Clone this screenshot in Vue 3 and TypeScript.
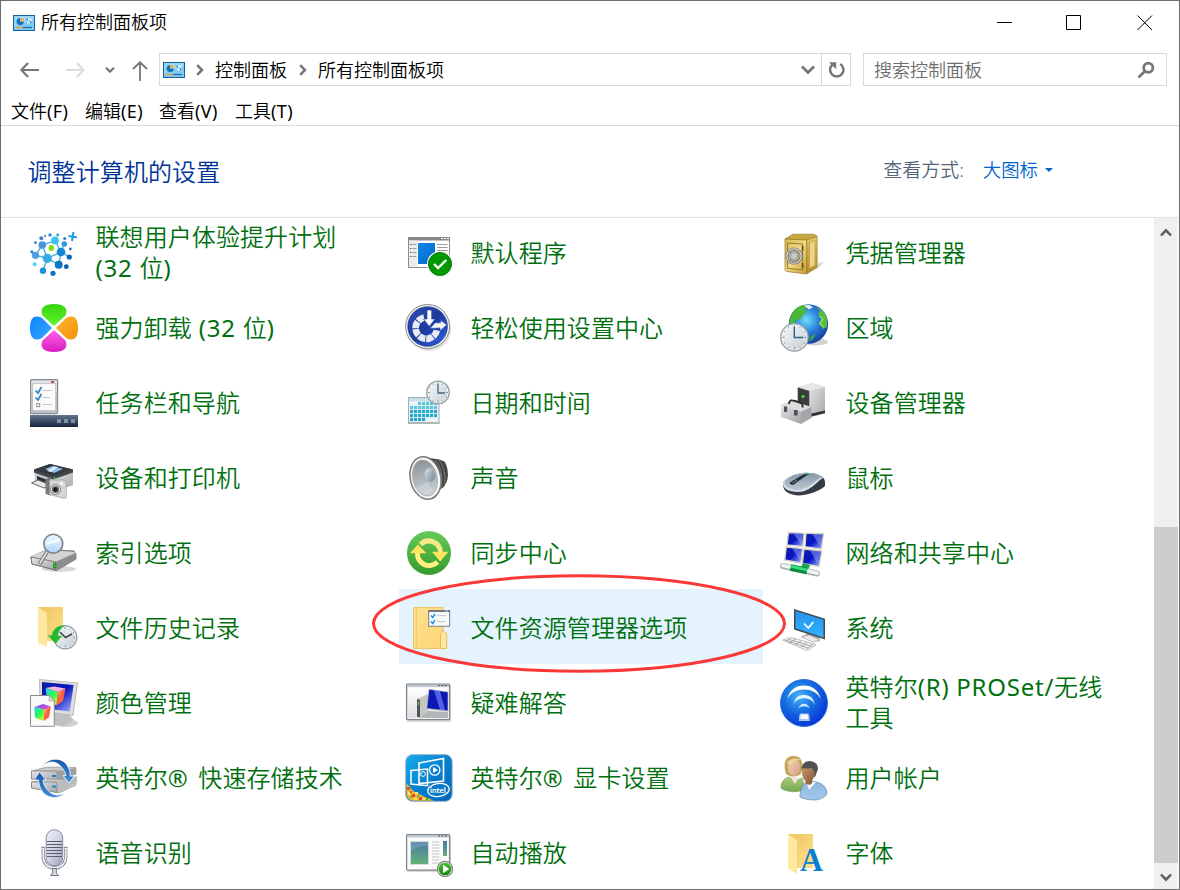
<script setup lang="ts">
interface PanelItem {
  label: string
  icon: string
  active?: boolean
}

interface Run {
  text: string
  kind: 'han' | 'latin' | 'mark'
}

const toRuns = (label: string): Run[] =>
  label
    .split(/(® ?|[\x20-\x7e]+)/)
    .filter((text) => text.length > 0)
    .map((text) => ({
      text,
      kind: text.startsWith('®') ? 'mark' : /^[\x20-\x7e]/.test(text) ? 'latin' : 'han',
    }))

const clockFace = (cx: number, cy: number, r: number): string => {
  let ticks = ''
  for (let i = 0; i < 12; i++) {
    const a = (i * Math.PI) / 6
    const k = i % 3 === 0 ? 0.68 : 0.75
    ticks += `<path d="M${cx + Math.sin(a) * r * k} ${cy - Math.cos(a) * r * k}L${cx + Math.sin(a) * r * 0.83} ${cy - Math.cos(a) * r * 0.83}" stroke="#7d8d99" stroke-width="1"/>`
  }
  return `<circle cx="${cx}" cy="${cy}" r="${r - 0.8}" fill="url(#g-clock)" stroke="#9aa5ab" stroke-width="1.5"/><circle cx="${cx}" cy="${cy}" r="${r - 2}" fill="none" stroke="#f4f7f9" stroke-width="1"/>${ticks}`
}

const calendarCells = (): string => {
  let out = ''
  for (let r = 0; r < 5; r++) {
    for (let c = 0; c < 7; c++) {
      if ((r === 0 && c < 2) || (r === 4 && c > 3)) continue
      out += `<rect x="${5 + c * 4}" y="${23 + r * 4}" width="3.1" height="3.1" fill="${r < 2 ? '#5cc6dc' : '#22a9cf'}"/>`
    }
  }
  return out
}

const sheetLines = (x: number, y: number, w: number, n: number, step: number, color: string): string =>
  Array.from({ length: n }, (_, i) => `<rect x="${x}" y="${y + i * step}" width="${w}" height="1" fill="${color}"/>`).join('')

const experience = (): string => {
  const dots: [number, number, number, string][] = [
    [17.3, 29.3, 4.6, '#35a9e2'], [25, 11.5, 3.9, '#3fc4ee'], [31, 23, 4.3, '#0f86cf'], [28.7, 35.7, 4, '#0b74c4'],
    [13, 41.7, 3.2, '#1f93d8'], [5.5, 26.3, 3.6, '#4f9fe0'], [12.3, 16, 3.8, '#4a93d6'], [34.3, 15, 2.8, '#2c9ce0'],
    [23, 44.3, 2.6, '#1272c0'], [36.3, 37.7, 2.4, '#0e5fae'], [39.3, 28, 2.6, '#0b63b4'], [4.7, 35.3, 2.1, '#5fd4f5'],
    [1.8, 22.7, 1.5, '#2f7ecb'], [5.5, 13.7, 1.4, '#2f7ecb'], [20, 6, 1.7, '#2b86cf'], [11.3, 9.3, 2, '#3b7fc8'],
    [27.7, 6, 1.4, '#2b9ade'], [34.7, 9.5, 1.6, '#2b86cf'], [40.3, 20, 1.4, '#2471bf'], [15, 7, 1, '#2471bf'],
  ]
  return `<path d="M17.3 29.3L31 23M17.3 29.3L28.7 35.7M17.3 29.3L5.5 26.3L12.3 16L25 11.5L31 23L28.7 35.7M31 23L34.3 15M31 23L39.3 28M17.3 29.3L13 41.7M12.3 16L17.3 29.3" stroke="#4bb0e4" stroke-width="1.4" fill="none"/>` +
    dots.map(([x, y, r, c]) => `<ellipse cx="${x}" cy="${y}" rx="${r}" ry="${r}" fill="${c}"/>`).join('') +
    `<circle cx="21.3" cy="19" r="4.2" fill="#fff"/><ellipse cx="21.3" cy="19" rx="2.7" ry="3" fill="#7fe000"/><path d="M43.5 3L42 12M38.5 7L47 8.3" stroke="#1e9fdc" stroke-width="2.1"/>`
}

const netScreen = (p: string, s: string): string =>
  `<path d="${p}" fill="url(#g-screen)" stroke="#d6d2c6" stroke-width="1.3"/><path d="${s}" fill="#8f9cf0" opacity=".55"/>`

const icons = {
  experience: experience(),
  clover: `<path d="M24 22L12.5 11.5C9.5 4 14 0 24 0S38.5 4 35.5 11.5Z" fill="url(#g-lime)"/><path d="M24 26L12.5 36.5C9.5 44 14 48 24 48S38.5 44 35.5 36.5Z" fill="url(#g-pink)"/><path d="M22 24L12 14C4 10 0 14 0 24S4 38 12 34Z" fill="url(#g-azure)"/><path d="M26 24L36 14C44 10 48 14 48 24S44 38 36 34Z" fill="url(#g-orange)"/>`,
  taskbar: `<rect x=".6" y=".6" width="27" height="34" rx=".8" fill="#dfe2e4" stroke="#868b90" stroke-width="1.2"/><rect x="1.2" y="13" width="26" height="21" fill="#b9c1c9"/><rect x="21" y="2" width="3" height="2" fill="#c0504d"/><rect x="2.7" y="4.7" width="23" height="27" fill="#fbfbfb" stroke="#b8bcc0" stroke-width=".8"/><path d="M5.5 11.5L8 14L11.5 8M5.5 18.5L8 21L11.5 15" fill="none" stroke="#2b84c4" stroke-width="1.7"/><rect x="6.7" y="24.7" width="3" height="3" fill="#fff" stroke="#8a8a8a"/><path d="M12.5 11.5H22M12.5 18.5H20M12.5 25.5H22" stroke="#c4c6c8"/><rect y="36" width="48" height="12" fill="url(#g-bar)"/><path d="M27 40h4v4h-4zM34 40h4v4h-4zM41 40h4v4h-4z" fill="#7f8fa8"/>`,
  defaults: `<rect x="3.5" y="8.5" width="41" height="30" fill="#fff" stroke="#8c8c8c"/><rect x="3" y="8" width="42" height="3.5" fill="#85888b"/><path d="M36 9h2v1h-2zM39 9h2v1h-2zM42 9h2v1h-2z" fill="#fff"/><rect x="4" y="11.5" width="8" height="26.5" fill="#ececec"/><path d="M5 15.5h1.5M5 19.5h1.5M5 23.5h1.5M5 27.5h1.5" stroke="#555"/><path d="M7.5 15.5h4M7.5 19.5h4M7.5 23.5h4M7.5 27.5h4" stroke="#999"/><rect x="13" y="14" width="17" height="21" fill="url(#g-win)"/>${sheetLines(32, 15, 10.5, 4, 3, '#9b9b9b')}<circle cx="35" cy="35" r="13" fill="#fff"/><circle cx="35" cy="35" r="11.6" fill="#009a00" stroke="#0b7a0b" stroke-width=".9"/><path d="M29 35L33 39L41.3 31" fill="none" stroke="#fff" stroke-width="2.4"/>`,
  ease: `<ellipse cx="24" cy="25.5" rx="22" ry="21.5" fill="#c9c9c9" opacity=".6"/><circle cx="22.6" cy="22.5" r="22" fill="#f2f2f2" stroke="#8a8a8a" stroke-width="1"/><circle cx="22.6" cy="22.5" r="19.8" fill="url(#g-ease)" stroke="#1b3480" stroke-width=".7"/><path d="M19 13.5A10.8 10.8 0 1 0 32 26" fill="none" stroke="#e9ecf2" stroke-width="6.6" stroke-dasharray="6.9 .9"/><path d="M22 6h4.7V15H30L24.3 22.5L18.5 15H22Z" fill="#fff" stroke="#2747a5" stroke-width=".7"/><path d="M25 24.5L30 18.8H35.5V16L41.8 20.8L35 27V24Z" fill="#f4f5f8" stroke="#2747a5" stroke-width=".7"/>`,
  date: `<rect x="3.5" y="18.5" width="30.5" height="25.5" fill="#eef4f7" stroke="#a3adb2"/><rect x="4" y="19" width="29.5" height="3.5" fill="#c9dfe9"/>${calendarCells()}<rect x="3" y="43.4" width="31.5" height="1.3" fill="#a3a7a9"/>${clockFace(33, 13.5, 12)}<path d="M33 5V14H40" fill="none" stroke="#47657b" stroke-width="1.3"/>`,
  safe: `<path d="M37 40L44 33L38 34Z" fill="#d8d8d8"/><path d="M5 10L13 5.2H34L37.3 7.5L27 11.5Z" fill="#c9a93f" stroke="#8f7420" stroke-width=".6"/><path d="M26.5 11L37.2 7.3V38.5L26.5 45Z" fill="url(#g-gold2)" stroke="#967a25" stroke-width=".6"/><path d="M29.5 13.5L35 11.3V36L29.5 39.5Z" fill="#edd48a" stroke="#c29b35" stroke-width=".7"/><path d="M5 10L26.7 11V45L7 42.5Q5 42 5 40Z" fill="url(#g-gold)" stroke="#8f7420" stroke-width=".7"/><path d="M7.5 14L22.5 15V41L7.5 39.2Z" fill="none" stroke="#9c7d27" stroke-width="1.1"/><path d="M22.6 17v5M22.6 34v5" stroke="#5e4a12" stroke-width="1.6"/><circle cx="14" cy="27" r="7.2" fill="#c3b378" stroke="#6e6f70" stroke-width="2.8"/><circle cx="14" cy="27" r="7.2" fill="none" stroke="#dadcdf" stroke-width="1.3"/><path d="M14 20V34M7 27H21M9 22L19 32M19 22L9 32" stroke="#8b8d8f" stroke-width="1.2"/><circle cx="14" cy="27" r="3.6" fill="#c6c9cd" stroke="#909294" stroke-width=".6"/>`,
  region: `<ellipse cx="35" cy="38" rx="13" ry="3.5" fill="#d3d3d3"/><circle cx="28.4" cy="20" r="19.7" fill="url(#g-globe)"/><path d="M11 12C13 5 20 1 25 1L28 3L24 5L27 8L23 11L20 16L16 15L15 20L11 21L9 18Z" fill="#4ab836"/><path d="M24 1.5L29 1L33 3L29 5.5Z" fill="#e9f3ec"/><path d="M36 3C41 5 45 8 47 14L47 23L43 25L39 19L42 14L38 10L40 7Z" fill="#57bd3c"/><path d="M31 32L36 30L33 35L29 38Z" fill="#3aa63e"/><path d="M39 12L43 15L40 20L44 23" fill="none" stroke="#92d964" stroke-width="1.5"/>${clockFace(14.4, 33.4, 14.4)}<path d="M14.3 23V33.5H23" fill="none" stroke="#355f7d" stroke-width="1.4"/>`,
  device: `<path d="M32 4L45 8V34.5L31 38L18 33V8Z" fill="#c9cacc"/><path d="M18 8L32 4L45 8L29.5 12Z" fill="#e6e7e8"/><path d="M17.7 8.5L29.5 12V36L17.7 32Z" fill="#3b3c3e"/><path d="M29.5 12L45 8.3V34.5L29.5 38Z" fill="url(#g-metal)"/><path d="M29.5 35L45 31.5V34L29.5 38Z" fill="#333"/><circle cx="23" cy="17.5" r="1.5" fill="#32f12c"/><path d="M31.5 27.5V39L21 45V33Z" fill="#a4a6aa"/><path d="M1 25.5L12 21.5L31.5 28L21 33Z" fill="#dcdddf"/><path d="M1 25.5L21 33V45L1 38Z" fill="url(#g-metal)"/><path d="M9 25C9.5 20.5 12 21 15 22L21 24Q23 25 22.5 28.5" fill="none" stroke="#303030" stroke-width="1.9"/><path d="M4 27.5h3.2v5.5H4zM14 31h3.7v5.5H14z" fill="#515357"/>`,
  printer: `<path d="M4.5 18L22 26L43 17V31L23 38L5 29Z" fill="#c6c7c8"/><path d="M22 25L43 17V31L23 37Z" fill="url(#g-metal)"/><path d="M4 15.5L20 10L43 15.5V18.5L23 25.5L4 18.5Z" fill="#43474b"/><path d="M4 15.5L20 10L43 15.5L23 22Z" fill="#343a40"/><path d="M15 15L23 12L33 15L24 19Z" fill="#8cbde8"/><path d="M17 17L24 12.5L28 13L21 18Z" fill="#deefff"/><path d="M7 22L20 27V30L7 26Z" fill="#2e3032"/><path d="M1.5 29L8 26L20 31L14 34Z" fill="#e8e8e8" stroke="#626467" stroke-width="1"/><path d="M15.5 25L21 23V41.5L15.5 40Z" fill="#777a7c"/><path d="M19.5 26H34L36.3 28V43.5L34 44.5L19.5 40.5Z" fill="#d5d6d6" stroke="#929292" stroke-width=".6"/><circle cx="25.5" cy="35.5" r="5" fill="#efefef" stroke="#777" stroke-width="1"/><circle cx="25.5" cy="35.5" r="3.5" fill="#555a5c"/><circle cx="25.3" cy="35.5" r="1.9" fill="#16191b"/><rect x="30" y="28.5" width="3" height="2" fill="#fff"/><circle cx="24.5" cy="24" r="1.1" fill="#29d337"/>`,
  indexing: `<ellipse cx="29" cy="40" rx="17" ry="3" fill="#d8d8d8"/><path d="M.8 28L17 20.5L44 22L46 25V30L26.5 41.5L2 35Z" fill="#a9aaab" stroke="#656565" stroke-width=".8"/><path d="M.8 27.5L17 20.5L46 23.5L26 32.5Z" fill="#d4d4d4"/><path d="M1 28L26 33V41L2 35Z" fill="url(#g-metal)" stroke="#686868" stroke-width=".7"/><path d="M26 33L46 24V30L26.5 41.3Z" fill="#8b8d8e"/><rect x="23.3" y="34" width="2.6" height="5" fill="#18dc18" stroke="#075a07" stroke-width=".5"/><path d="M17 23L9.5 35" stroke="#666" stroke-width="3.7"/><path d="M17 23L9.7 34.5" stroke="#dfdfdf" stroke-width="2"/><circle cx="23.3" cy="14.7" r="9.5" fill="url(#g-lens)" stroke="#7e8286" stroke-width="1.6"/><path d="M16 15Q21 13 30 11" stroke="#fff" stroke-width="2.5" opacity=".7" fill="none"/>`,
  history: `<path d="M8 3H33V37H17L8 8Z" fill="url(#g-fold)"/><path d="M8 3L17 9V43L8 39Z" fill="#ffe8a0"/>${clockFace(35.2, 33.3, 12.3)}<path d="M30 28L35.5 33.5L42 30" fill="none" stroke="#3b444c" stroke-width="1.5"/><path d="M35 21.5C27 21 22.5 26 22 31.5H18L25.5 39.5L32 32H28C28 28 30 24.5 35 21.5Z" fill="#27b72e" stroke="#5ec95f" stroke-width=".6"/>`,
  sound: `<path d="M24 4Q36 5 40 8Q44 16 42.5 25Q41 31 37.5 34L28 39Z" fill="#454545"/><path d="M30 6Q39 14 36 34M34 6.5Q42 16 39.5 32" stroke="#767676" fill="none" stroke-width="1"/><ellipse cx="20.5" cy="24" rx="15.2" ry="21.5" transform="rotate(-13 20.5 24)" fill="#f5f5f5" stroke="#797979" stroke-width="1.5"/><ellipse cx="20" cy="24" rx="12.2" ry="18.3" transform="rotate(-13 20 24)" fill="url(#g-cone)" stroke="#aaa" stroke-width=".8"/><ellipse cx="25" cy="20.8" rx="5.2" ry="7" transform="rotate(-10 25 21)" fill="url(#g-dome)"/><path d="M10 34Q18 31 22 27L28 36Q24 42 18 40Z" fill="#cdd9df" opacity=".5"/>`,
  sync: `<circle cx="24" cy="24" r="22" fill="url(#g-sync)"/><path d="M15.5 15.5A11.7 11.7 0 0 1 35.5 23.5" fill="none" stroke="#f4ea83" stroke-width="5"/><path d="M27 22.7H43.3L35.2 32.5Z" fill="#ffe45f"/><path d="M32.5 33A11.7 11.7 0 0 1 12.5 23.5" fill="none" stroke="#fff07f" stroke-width="5"/><path d="M5 24.3H21.5L12.8 15.5Z" fill="#ffe45f"/>`,
  options: `<path d="M8.5 3.5H38V29H41.5V44.5H8.5Z" fill="url(#g-folder)" stroke="#eac45a" stroke-width=".9"/><path d="M11.5 4V44" stroke="#edc95e" stroke-width=".7"/><path d="M35.5 44.5V30L38 26.5L41.7 30V44.5Z" fill="#ffe7a1" stroke="#e2b64f" stroke-width=".8"/><rect x="23.6" y="6.6" width="21" height="15.7" fill="#f8fafb" stroke="#8b9197" stroke-width="1.2"/><path d="M23 7h22" stroke="#70777e" stroke-width="2"/><path d="M40 7h1M42 7h1" stroke="#fff"/><path d="M26 11.5L27.7 13.5L30 10M26 17.5L27.7 19.5L30 16" fill="none" stroke="#268bd8" stroke-width="1.4"/><path d="M31.5 11.7H41M31.5 17.7H41" stroke="#bfc3c7"/>`,
  mouse: `<path d="M3 31C2 24 18 18.7 26 18.7C37 18.7 45 22 45 28V32C41 36 29 41.5 18 41.5C8 41 3 36 3 31Z" fill="#343c45"/><path d="M3 30C3 24 18 18.7 26 18.7C33 18.5 42 21 43 24C38 26 31 38 18 38C8 38 3 34 3 30Z" fill="#d8dfe5"/><path d="M4.5 28.5C6 23 19 19.3 26 19.3C33 19 40 21.3 42 23.3C36 25 29 36 17 36C9 35.5 4.5 32 4.5 28.5Z" fill="url(#g-mouse)"/><path d="M9.5 29C14 26 20 22 25 20L28.5 20.5C24 23 19 26.5 14 30.5Q10.5 31.5 9.5 29Z" fill="#222d36"/><path d="M12.5 29L17 26" stroke="#66727d" stroke-width="1.5"/><path d="M26 19.5L30 20.5" stroke="#38ad4a" stroke-width="1.2"/>`,
  network: `${netScreen('M8.5 3.5L24 4.3L22.7 17.5L7 15.8Z', 'M13 4L23 4.4L21.5 16Z')}${netScreen('M26 4.2L43.5 4.8L41.3 20L25 17.7Z', 'M32 4.8L42.8 5.3L41 18.5Z')}${netScreen('M6.3 18L22.4 19.7L20.7 34L4.8 31Z', 'M12 19L21.6 20L20 32Z')}${netScreen('M24 20L41.7 22L39 37.5L22.4 34.5Z', 'M30 21L40.8 22.6L38 36Z')}<path d="M23 34L30 36L28 42L20 40Z" fill="#13a84b"/><path d="M3 37L37 44.5" stroke="#aab3b0" stroke-width="6" stroke-linecap="round"/><path d="M3 36.5L37 44" stroke="#eef5f2" stroke-width="3.8" stroke-linecap="round"/><path d="M10.5 38.5L27 42" stroke="#098c3b" stroke-width="6.7"/><path d="M11 37.3L27 41" stroke="#37e07d" stroke-width="2.8"/>`,
  system: `<path d="M21 33L28 29L39 32L40 37L33 38Z" fill="#a8abae"/><path d="M21 33L29 31L40 36L33 38Z" fill="#ececec" stroke="#999" stroke-width=".5"/><path d="M14 5L45 14.7V35.5L14 25.5Z" fill="#42494e"/><path d="M15.5 7L43.5 15.7V33.4L15.5 24.3Z" fill="url(#g-sys)"/><path d="M24 19.5L28.3 24L33.3 18" fill="none" stroke="#fff" stroke-width="1.7"/><path d="M2.5 36L11 33.4L36 40.5L29 46L26 46.2Z" fill="#f0f0f0" stroke="#9c9c9c" stroke-width=".6"/><path d="M5 36L28 44M8 35L32 42.5M9 39L16 35M15 41L21 37M21 43L27 38.5M27 45L33 40" stroke="#aaa" stroke-width="1"/>`,
  color: `<ellipse cx="36" cy="44" rx="12" ry="4" fill="#d2d2d2"/><path d="M23 34L39 36L44 41Q35 49 24 46Z" fill="#bfc1c3"/><path d="M9.5 .5L47.6 4L43 36.5L10 32Z" fill="#deded8" stroke="#999" stroke-width=".6"/><path d="M12 3L43.6 6L39.8 32.4L12 29Z" fill="url(#g-screen)"/><path d="M15.7 9L28 13L26.5 26.5L17 21Z" fill="url(#g-cubeleft)"/><path d="M28 13L35.5 9.5L33 22L26.5 26.5Z" fill="url(#g-cuberight)"/><path d="M15.7 9L24 7.5L35.5 9.5L28 13Z" fill="#f6b6dc"/><path d="M.5 16.5H19L24.3 21.5V47.3H.5Z" fill="#fafafa" stroke="#8b8b8b"/><path d="M19 16.5V22H24.3Z" fill="#ddd" stroke="#999" stroke-width=".6"/><path d="M4.3 28L14.5 30.5L13.5 42L5 38.5Z" fill="url(#g-cubeleft)"/><path d="M14.5 30.5L20.8 27.5L19 38.5L13.5 42Z" fill="url(#g-cuberight)"/><path d="M4.3 28L13 25L20.8 27.5L14.5 30.5Z" fill="url(#g-top)"/>`,
  storage: `<path d="M1.5 17L17 13L46 13.5V20L28 27.5L1.5 25Z" fill="#c8cacb" stroke="#888" stroke-width=".6"/><path d="M1.5 17H27V27.5L1.5 25Z" fill="url(#g-metal)" stroke="#777" stroke-width=".7"/><path d="M27 17L46 14V20L28 27.5Z" fill="#9b9fa2"/><path d="M1.5 28L17 25L46 25.5V31L29 39L1.5 34Z" fill="#c8cacb" stroke="#888" stroke-width=".6"/><path d="M1.5 28H27V38.5L1.5 34Z" fill="url(#g-metal)" stroke="#777" stroke-width=".7"/><path d="M27 28L47 22V28L29 39Z" fill="#babdbf"/><path d="M22 22h4M22 32.5h4" stroke="#1689cf" stroke-width="2"/><path d="M11.5 13C17 4 31 2 37 11C40 16 40.3 19 40.3 22H44.5L39 29L33 21.5H36C34 14 28 8 22 8C18 8 14 10 11.5 13Z" fill="url(#g-arrow)" stroke="#fff" stroke-width=".8"/><path d="M36 38C29 46 17 45 12 37C9 32 9 30 8.5 26H4L9.5 18L16 26H13C14 35 22 41.5 28 41Q33 40.5 36 38Z" fill="url(#g-arrow)" stroke="#fff" stroke-width=".8"/>`,
  mic: `<rect x="16.2" y=".7" width="16.5" height="36" rx="8.2" fill="url(#g-mic)" stroke="#868aa0" stroke-width="1"/><path d="M17 12.5H32M17 15.5H32M17 18.5H32M17 21.5H32M17 24.5H32M17 27.5H32" stroke="#5a5f70" stroke-width="1.2"/><path d="M13.3 20V29Q14 38 24.5 39Q35 38 35.7 29V20" fill="none" stroke="#7b7e8b" stroke-width="3.3"/><path d="M13.3 20V29Q14 38 24.5 39Q35 38 35.7 29V20" fill="none" stroke="#f2f2f5" stroke-width="1.8"/><path d="M11.3 18.5h4M33.7 18.5h4" stroke="#8a8c99" stroke-width="1.3"/><path d="M22.7 39.5H26.3V44L28.5 46.5H20.5L22.7 44Z" fill="#d9dce5" stroke="#656979" stroke-width=".9"/>`,
  trouble: `<rect x="2" y="7" width="44" height="36" fill="#bbb" opacity=".55"/><rect x="1.6" y="5.1" width="43" height="35.5" rx=".8" fill="#f4f5f6" stroke="#7d858d" stroke-width="1.3"/><rect x="2.3" y="5.7" width="41.7" height="2.2" fill="#bdc5cd"/><path d="M33 6.5h2M36.5 6.5h2M40 6.5h2" stroke="#555" stroke-width="1.2"/><rect x="3" y="9" width="40" height="30" fill="url(#g-paper)"/><path d="M12 20L23 15V35L14 38.5L12 38Z" fill="#c6c6c6"/><path d="M12 20L15 21V38.5L12 37.5Z" fill="#555"/><path d="M13.5 23v3" stroke="#5ce336"/><path d="M23 32L43 33V39H15Z" fill="#b4b6b8"/><path d="M24 10.3L43 13V32L21.8 29.5Z" fill="#0a18b4" stroke="#bbb" stroke-width=".7"/><path d="M29 11L35 12L40 31L35 31Z" fill="#8392ff" opacity=".6"/>`,
  intel: `<rect x=".6" y=".6" width="46.6" height="46.8" rx="7" fill="url(#g-intel)" stroke="#9eb5cc" stroke-width="1"/><path d="M1.5 29L8 37L18 42L29 46.8H8Q1.5 46 1.5 39Z" fill="#f2b82b"/><path d="M2 33h3v3H2zM7 40h3v3H7zM14 43h3v3h-3zM5 37h2v2H5z" fill="#e54a2c"/><path d="M3 38h2v3H3zM10 38h3v2h-3zM17 44h3v2h-3zM9 44h3v2H9z" fill="#ffe26e"/><path d="M5 42h2v2H5zM12 41h2v2h-2zM21 44h2v2h-2z" fill="#54b557"/><path d="M14 9L38.5 4.5V27L14 29.5Z" fill="none" stroke="#fff" stroke-width="1.6"/><path d="M6 16.5L22.5 15V31.7L6 30Z" fill="none" stroke="#fff" stroke-width="1.5"/><circle cx="29.7" cy="16" r="5.2" fill="none" stroke="#fff" stroke-width="1.3"/><path d="M28 13V19L33 16Z" fill="#fff"/><circle cx="18" cy="20" r="2.4" fill="none" stroke="#fff"/><ellipse cx="33.5" cy="36" rx="10.8" ry="6.5" transform="rotate(-8 33.5 36)" fill="#0878c8" stroke="#fff" stroke-width="1.2"/><text x="25" y="38.7" font-family="Lato, sans-serif" font-weight="bold" font-size="8" fill="#fff">intel</text>`,
  autoplay: `<rect x="2" y="7" width="44" height="36" fill="#bbb" opacity=".55"/><rect x="1.6" y="5.6" width="43" height="35.5" rx=".8" fill="#fbfbfb" stroke="#7d858d" stroke-width="1.3"/><rect x="2.3" y="6.2" width="41.7" height="2.2" fill="#bdc5cd"/><path d="M33 7h2M36.5 7h2M40 7h2" stroke="#555" stroke-width="1.2"/><rect x="5" y="12" width="19" height="24" fill="#d6dcde"/><rect x="6" y="13" width="17" height="22" fill="url(#g-play)"/><path d="M6 22Q13 17 23 17V13H6Z" fill="#fff" opacity=".17"/>${sheetLines(27, 12.5, 7.5, 8, 3, '#c4c8cb')}<rect x="38" y="12" width="4" height="15" fill="url(#g-play)"/><circle cx="40" cy="40" r="7.6" fill="#e8e8e8" stroke="#858585" stroke-width="1.2"/><circle cx="40" cy="40" r="6.3" fill="url(#g-green)"/><path d="M38 35.8V44.2L44.2 40Z" fill="#fff"/>`,
  wifi: `<circle cx="24" cy="24" r="23.5" fill="url(#g-wifi)" stroke="#2c6fe0" stroke-width="1"/><path d="M7.3 20Q11 6.5 24 6.5T40.7 20Q36 10.5 24 10.5T7.3 20Z" fill="#fff"/><path d="M13.3 26Q15 15.8 24 15.8T35 26Q32 19.5 24 19.3T13.3 26Z" fill="#e2f5ff"/><path d="M18.5 29.5Q20 24.8 24 24.8T29.7 29.5Q27.5 27.3 24 27.2T18.5 29.5Z" fill="#c9ebff"/><path d="M20 34.5h8.5L29.7 38V42H19V38Z" fill="#a5c4f7"/><path d="M20.5 35.5h7.5V40H20.5Z" fill="#f4faff"/>`,
  users: `<path d="M1 34C1 27 5 24 9 23L15 27L22 24Q24 27 24 36Q12 40 2 35Z" fill="url(#g-greenwear)" stroke="#769552" stroke-width=".6"/><path d="M10 22L15 30L19 23Z" fill="#f3e5dc"/><path d="M6 20C2 7 7 1.5 14 2C22 2 24 9 21 20Q14 25 6 20Z" fill="#c5a45b"/><path d="M9 8Q14 5 19 8Q22 16 17 21Q13 23 9.5 19Q7 14 9 8Z" fill="url(#g-skin)"/><path d="M7 8Q13 2.5 22 6Q15 6 9 11Z" fill="#ead6a0"/><path d="M20 41C21 31 25 28 30 27L36 28Q46 30 47 39Q46 44 36 46Q25 46 20 43Z" fill="url(#g-bluewear)" stroke="#6486aa" stroke-width=".7"/><path d="M26 28L29 36L36 28Z" fill="#f3f5f8"/><path d="M21.5 14Q23 7 30 7Q38 8 38 15L35 23L23 20Z" fill="#505050"/><path d="M22.5 14Q25 15 32 14L35 19Q33 29 28 29Q22 25 22 19Z" fill="url(#g-skin2)"/><path d="M25 26.5Q28 30 32 26V29.5Q29 32 26 29.5Z" fill="#94673d"/>`,
  fonts: `<path d="M8 5H33V39H17L8 10Z" fill="url(#g-fold)"/><path d="M8 5L17 11V45L8 39.5Z" fill="#ffe8a0"/><text x="20" y="42.3" font-family="Liberation Serif, serif" font-weight="bold" font-size="33" textLength="23" lengthAdjust="spacingAndGlyphs" fill="#0a7fd0">A</text>`,
}

const items: PanelItem[] = [
  { label: '联想用户体验提升计划\n(32 位)', icon: icons.experience },
  { label: '默认程序', icon: icons.defaults },
  { label: '凭据管理器', icon: icons.safe },
  { label: '强力卸载 (32 位)', icon: icons.clover },
  { label: '轻松使用设置中心', icon: icons.ease },
  { label: '区域', icon: icons.region },
  { label: '任务栏和导航', icon: icons.taskbar },
  { label: '日期和时间', icon: icons.date },
  { label: '设备管理器', icon: icons.device },
  { label: '设备和打印机', icon: icons.printer },
  { label: '声音', icon: icons.sound },
  { label: '鼠标', icon: icons.mouse },
  { label: '索引选项', icon: icons.indexing },
  { label: '同步中心', icon: icons.sync },
  { label: '网络和共享中心', icon: icons.network },
  { label: '文件历史记录', icon: icons.history },
  { label: '文件资源管理器选项', icon: icons.options, active: true },
  { label: '系统', icon: icons.system },
  { label: '颜色管理', icon: icons.color },
  { label: '疑难解答', icon: icons.trouble },
  { label: '英特尔(R) PROSet/无线\n工具', icon: icons.wifi },
  { label: '英特尔® 快速存储技术', icon: icons.storage },
  { label: '英特尔® 显卡设置', icon: icons.intel },
  { label: '用户帐户', icon: icons.users },
  { label: '语音识别', icon: icons.mic },
  { label: '自动播放', icon: icons.autoplay },
  { label: '字体', icon: icons.fonts },
]

const menus: string[] = ['文件(F)', '编辑(E)', '查看(V)', '工具(T)']

const panelGlyph = `<rect x=".5" y=".5" width="21" height="15" fill="#7dcbf5" stroke="#1c5f96"/><path d="M1 1H21V4L1 12Z" fill="#a6defc" opacity=".6"/><circle cx="7.2" cy="6.5" r="3.6" fill="#1372b8"/><path d="M7.5 6.2V2.2A4 4 0 0 1 11.5 6.2Z" fill="#f4a62a" stroke="#c9ecfd" stroke-width=".6"/><path d="M14 4.5H19M14 7.5H19" stroke="#eef8ff" stroke-width="1.4"/><path d="M13.5 4.5h1.5M17 7.5h1.5" stroke="#1372b8" stroke-width="1.4"/><path d="M3 12.5H10" stroke="#f0a030" stroke-width="1.3"/><path d="M10 12.5H19" stroke="#1d6ea8" stroke-width="1.3"/>`

interface Gradient {
  id: string
  from: string
  to: string
  mid?: string
  diagonal?: boolean
}

const gradients: Gradient[] = [
  { id: 'g-clock', from: '#f7f9fa', to: '#c3cdd4', diagonal: true },
  { id: 'g-lime', from: '#35d30a', to: '#62f533' },
  { id: 'g-pink', from: '#ff62e8', to: '#d91bbd' },
  { id: 'g-azure', from: '#0a86ff', to: '#3ba5ff', diagonal: true },
  { id: 'g-orange', from: '#ffb32d', to: '#f09408', diagonal: true },
  { id: 'g-bar', from: '#66758e', to: '#16243f', mid: '#3c4b66' },
  { id: 'g-win', from: '#1088e8', to: '#0067ca', diagonal: true },
  { id: 'g-ease', from: '#2c50b8', to: '#2f64e8', mid: '#1b3b9c', diagonal: true },
  { id: 'g-gold', from: '#d9ba54', to: '#c39a35', mid: '#f0d888', diagonal: true },
  { id: 'g-gold2', from: '#e4c465', to: '#b08b2c' },
  { id: 'g-metal', from: '#e3e4e5', to: '#a4a6a9', diagonal: true },
  { id: 'g-lens', from: '#eef8ff', to: '#b0d4fb' },
  { id: 'g-fold', from: '#edc55f', to: '#ffe08a', diagonal: true },
  { id: 'g-folder', from: '#fee093', to: '#fbd671', diagonal: true },
  { id: 'g-cone', from: '#8d9296', to: '#ccd4d9' },
  { id: 'g-dome', from: '#d9e7f0', to: '#71818d', diagonal: true },
  { id: 'g-sync', from: '#64cb59', to: '#36992d' },
  { id: 'g-mouse', from: '#8597ab', to: '#bdc8d4' },
  { id: 'g-screen', from: '#1020a0', to: '#aab6ff', mid: '#0714c4', diagonal: true },
  { id: 'g-sys', from: '#2494ee', to: '#35b1ff' },
  { id: 'g-cubeleft', from: '#10d8ff', to: '#f4ff20', mid: '#30f850', diagonal: true },
  { id: 'g-cuberight', from: '#ffc04a', to: '#ff7a30', mid: '#ff5a48', diagonal: true },
  { id: 'g-top', from: '#5364ff', to: '#ff40c7', diagonal: true },
  { id: 'g-arrow', from: '#1557a8', to: '#468fd9' },
  { id: 'g-mic', from: '#f1f2fb', to: '#999db6', mid: '#d1d5e4', diagonal: true },
  { id: 'g-paper', from: '#ffffff', to: '#dddee0' },
  { id: 'g-intel', from: '#16adf0', to: '#0365b7', mid: '#0780cd', diagonal: true },
  { id: 'g-play', from: '#4777a5', to: '#62b278' },
  { id: 'g-green', from: '#49c333', to: '#16820f' },
  { id: 'g-greenwear', from: '#aacd80', to: '#75a74b' },
  { id: 'g-bluewear', from: '#8bb6df', to: '#a4c7eb' },
  { id: 'g-skin', from: '#f4d1b6', to: '#d49f7d', diagonal: true },
  { id: 'g-skin2', from: '#ca986a', to: '#805431', diagonal: true },
]
</script>

<template>
  <div class="window">
    <svg class="defs" width="0" height="0" aria-hidden="true">
      <defs>
        <linearGradient v-for="g in gradients" :id="g.id" :key="g.id" x1="0" y1="0" :x2="g.diagonal ? 1 : 0" y2="1">
          <stop offset="0" :stop-color="g.from" />
          <stop v-if="g.mid" offset=".5" :stop-color="g.mid" />
          <stop offset="1" :stop-color="g.to" />
        </linearGradient>
        <radialGradient id="g-globe" cx=".45" cy=".4" r=".6">
          <stop offset="0" stop-color="#6fe0f8" />
          <stop offset=".5" stop-color="#2a85dd" />
          <stop offset="1" stop-color="#163f9f" />
        </radialGradient>
        <radialGradient id="g-wifi" cx=".4" cy=".35" r=".65">
          <stop offset="0" stop-color="#46b4f5" />
          <stop offset=".5" stop-color="#176fe2" />
          <stop offset="1" stop-color="#0738d4" />
        </radialGradient>
      </defs>
    </svg>

    <header class="titlebar">
      <svg class="app-icon" viewBox="0 0 22 16" v-html="panelGlyph"></svg>
      <span class="title">所有控制面板项</span>
      <div class="controls">
        <svg viewBox="0 0 16 16"><path d="M0 7.5H15" /></svg>
        <svg viewBox="0 0 16 16"><path d="M.5 .5H14.5V14.5H.5Z" /></svg>
        <svg viewBox="0 0 16 16"><path d="M.5 .5L15 15M15 .5L.5 15" /></svg>
      </div>
    </header>

    <nav class="toolbar">
      <div class="history">
        <svg class="back" viewBox="0 0 20 16"><path d="M8 1L1.5 8L8 15M1.5 8H19" /></svg>
        <svg class="forward" viewBox="0 0 20 16"><path d="M12 1L18.5 8L12 15M18.5 8H1" /></svg>
        <svg class="recent" viewBox="0 0 10 6"><path d="M1 .8L5 4.6L9 .8" /></svg>
        <svg class="up" viewBox="0 0 16 20"><path d="M1 8L8 1.3L15 8M8 1.5V20" /></svg>
      </div>
      <div class="address">
        <svg class="app-icon" viewBox="0 0 22 16" v-html="panelGlyph"></svg>
        <svg class="crumb" viewBox="0 0 8 12"><path d="M1.2 1.2L6 6L1.2 10.8" /></svg>
        <span>控制面板</span>
        <svg class="crumb second" viewBox="0 0 8 12"><path d="M1.2 1.2L6 6L1.2 10.8" /></svg>
        <span>所有控制面板项</span>
        <svg class="drop" viewBox="0 0 14 10"><path d="M1 1.5L7 7.5L13 1.5" /></svg>
        <div class="refresh">
          <svg viewBox="0 0 18 18"><path d="M12.2 3A6.7 6.7 0 1 1 5 3.2" /><path class="solid" d="M1 1.2H8.2V8.2L5.9 5.9L3.5 3.8Z" /></svg>
        </div>
      </div>
      <div class="search">
        <span>搜索控制面板</span>
        <svg viewBox="0 0 18 18"><circle cx="11.3" cy="6.7" r="4.6" /><path d="M7.8 10.2L1.5 16.5" /></svg>
      </div>
    </nav>

    <div class="menubar">
      <div v-for="menu in menus" :key="menu" class="menu"><span v-for="(run, i) in toRuns(menu)" :key="i" :class="run.kind">{{ run.text }}</span></div>
    </div>

    <section class="heading">
      <h1>调整计算机的设置</h1>
      <div class="view">
        <span class="view-label">查看方式:</span>
        <span class="view-value">大图标</span>
        <i class="caret"></i>
      </div>
    </section>

    <main class="content">
      <div class="grid">
        <div v-for="item in items" :key="item.label" class="item" :class="{ active: item.active }">
          <svg class="icon" viewBox="0 0 48 48" v-html="item.icon"></svg>
          <div class="label">
            <div v-for="(line, n) in item.label.split('\n')" :key="n" class="line"><span v-for="(run, i) in toRuns(line)" :key="i" :class="run.kind">{{ run.text }}</span></div>
          </div>
        </div>
      </div>
      <div class="scrollbar">
        <svg viewBox="0 0 12 9"><path d="M1 7.5L6 2.3L11 7.5" /></svg>
        <div class="track"><div class="thumb"></div></div>
        <svg viewBox="0 0 12 9"><path d="M1 1.5L6 6.7L11 1.5" /></svg>
      </div>
    </main>

    <svg class="marker" viewBox="0 0 416 100"><ellipse cx="208" cy="50.5" rx="205.5" ry="47.7" /></svg>
  </div>
</template>

<style>
body {
  margin: 0;
  background: #fff;
}
</style>

<style scoped>
.window {
  position: relative;
  box-sizing: border-box;
  width: 1180px;
  height: 890px;
  overflow: hidden;
  display: flex;
  flex-direction: column;
  border: 1px solid #6e6c6e;
  background: #fff;
  color: #000;
  font: 18px/24px "Noto Sans", "Noto Sans CJK SC", sans-serif;
  font-weight: 350;
}

svg {
  display: block;
  flex: none;
  fill: none;
}

.latin,
.mark {
  font-weight: 400;
}

.defs {
  position: absolute;
}

.titlebar {
  display: flex;
  align-items: center;
  height: 43px;
  padding-left: 12px;
}

.app-icon {
  width: 22px;
  height: 16px;
}

.title {
  margin: 0 0 1px 6px;
}

.controls {
  display: flex;
  margin: 0 26px 0 auto;
  gap: 54px;
}

.controls svg {
  width: 16px;
  height: 16px;
  stroke: #000;
  stroke-width: 1;
}

.controls svg:nth-child(2) {
  margin-right: 1px;
  margin-left: -1px;
}

.toolbar {
  display: flex;
  height: 33px;
  margin-top: 9px;
}

.history {
  display: flex;
  align-items: center;
  width: 158px;
  box-sizing: border-box;
  padding-left: 19px;
  stroke: #767676;
  stroke-width: 2.2;
}

.history .back,
.history .forward {
  width: 20px;
  height: 16px;
}

.history .forward {
  margin-left: 25px;
  stroke: #dcdcdc;
}

.history .recent {
  width: 10px;
  height: 6px;
  margin-left: 20px;
}

.history .up {
  width: 16px;
  height: 20px;
  margin-left: 17px;
  margin-top: 2px;
  stroke-width: 1.8;
}

.address,
.search {
  display: flex;
  align-items: center;
  box-sizing: border-box;
  border: 1px solid #d9d9d9;
}

.address {
  width: 692px;
  padding-left: 3px;
}

.crumb {
  width: 8px;
  height: 12px;
  margin: 0 11px;
  stroke: #767676;
  stroke-width: 2.5;
}

.crumb.second {
  margin: 0 11px 0 12px;
}

.drop {
  width: 14px;
  height: 10px;
  margin-left: auto;
  margin-right: 6px;
  stroke: #767676;
  stroke-width: 2.8;
}

.refresh {
  display: flex;
  align-items: center;
  justify-content: center;
  box-sizing: border-box;
  width: 29px;
  height: 31px;
  padding-left: 2px;
  border-left: 1px solid #d9d9d9;
}

.refresh svg {
  width: 18px;
  height: 18px;
  stroke: #767676;
  stroke-width: 2.5;
}

.refresh .solid {
  fill: #767676;
  stroke: none;
}

.search {
  justify-content: space-between;
  width: 304px;
  margin-left: 12px;
  padding: 0 11px 0 10px;
  color: #6d6d6d;
}

.search svg {
  width: 18px;
  height: 18px;
  stroke: #767676;
  stroke-width: 2.8;
}

.menubar {
  display: flex;
  align-items: center;
  box-sizing: border-box;
  height: 40px;
  padding: 11px 0 0 10px;
  border-bottom: 1px solid #dadada;
}

.menu {
  width: 74px;
}

.menu:nth-child(3) {
  width: 76px;
}

.menu .latin {
  letter-spacing: 0.4px;
}

.heading {
  display: flex;
  align-items: center;
  justify-content: space-between;
  box-sizing: border-box;
  height: 92px;
  padding: 0 126px 0 26.5px;
  border-bottom: 1px solid #d9e3ee;
}

h1 {
  margin: 0;
  color: #003399;
  font-size: 24px;
  font-weight: inherit;
  letter-spacing: 0.1px;
}

.view {
  display: flex;
  align-items: center;
  margin-bottom: 3px;
}

.view-label {
  color: #56667a;
  font-size: 19px;
}

.view-value {
  margin-left: 19px;
  color: #0066cc;
  font-size: 18.4px;
}

.caret {
  margin: 0 0 0 7px;
  border: 4px solid transparent;
  border-top-color: #0066cc;
  border-bottom: 0;
}

.content {
  display: flex;
  flex: 1;
  min-height: 0;
  overflow: hidden;
}

.grid {
  display: grid;
  flex: 1;
  grid-template-columns: repeat(3, 364px);
  grid-auto-rows: 75px;
  column-gap: 11px;
  margin-top: -4px;
  padding-left: 23px;
}

.item {
  display: flex;
  align-items: center;
  box-sizing: border-box;
  padding: 3px 0 0 6px;
}

.item.active {
  background: #e5f3ff;
}

.icon {
  width: 48px;
  height: 48px;
}

.label {
  margin: 0 0 2px 17.5px;
  color: #00700f;
  font-size: 24px;
  line-height: 31px;
  letter-spacing: 0.08px;
}

.line {
  height: 31px;
  white-space: pre;
}

.label .latin {
  letter-spacing: 0.75px;
}

.label .mark {
  letter-spacing: 2.2px;
}

.scrollbar {
  display: flex;
  flex-direction: column;
  align-items: center;
  width: 24px;
  margin-right: 1px;
  background: #f0f0f0;
}

.scrollbar svg {
  width: 12px;
  height: 9px;
  margin: 10px 0 7px;
  stroke: #5c5c5c;
  stroke-width: 2.5;
}

.track {
  display: flex;
  flex: 1;
  align-items: flex-end;
  width: 24px;
}

.thumb {
  width: 24px;
  height: 336px;
  background: #cdcdcd;
}

.marker {
  position: absolute;
  top: 572px;
  left: 370px;
  width: 416px;
  height: 100px;
  stroke: #fb3838;
  stroke-width: 3;
  pointer-events: none;
}
</style>
